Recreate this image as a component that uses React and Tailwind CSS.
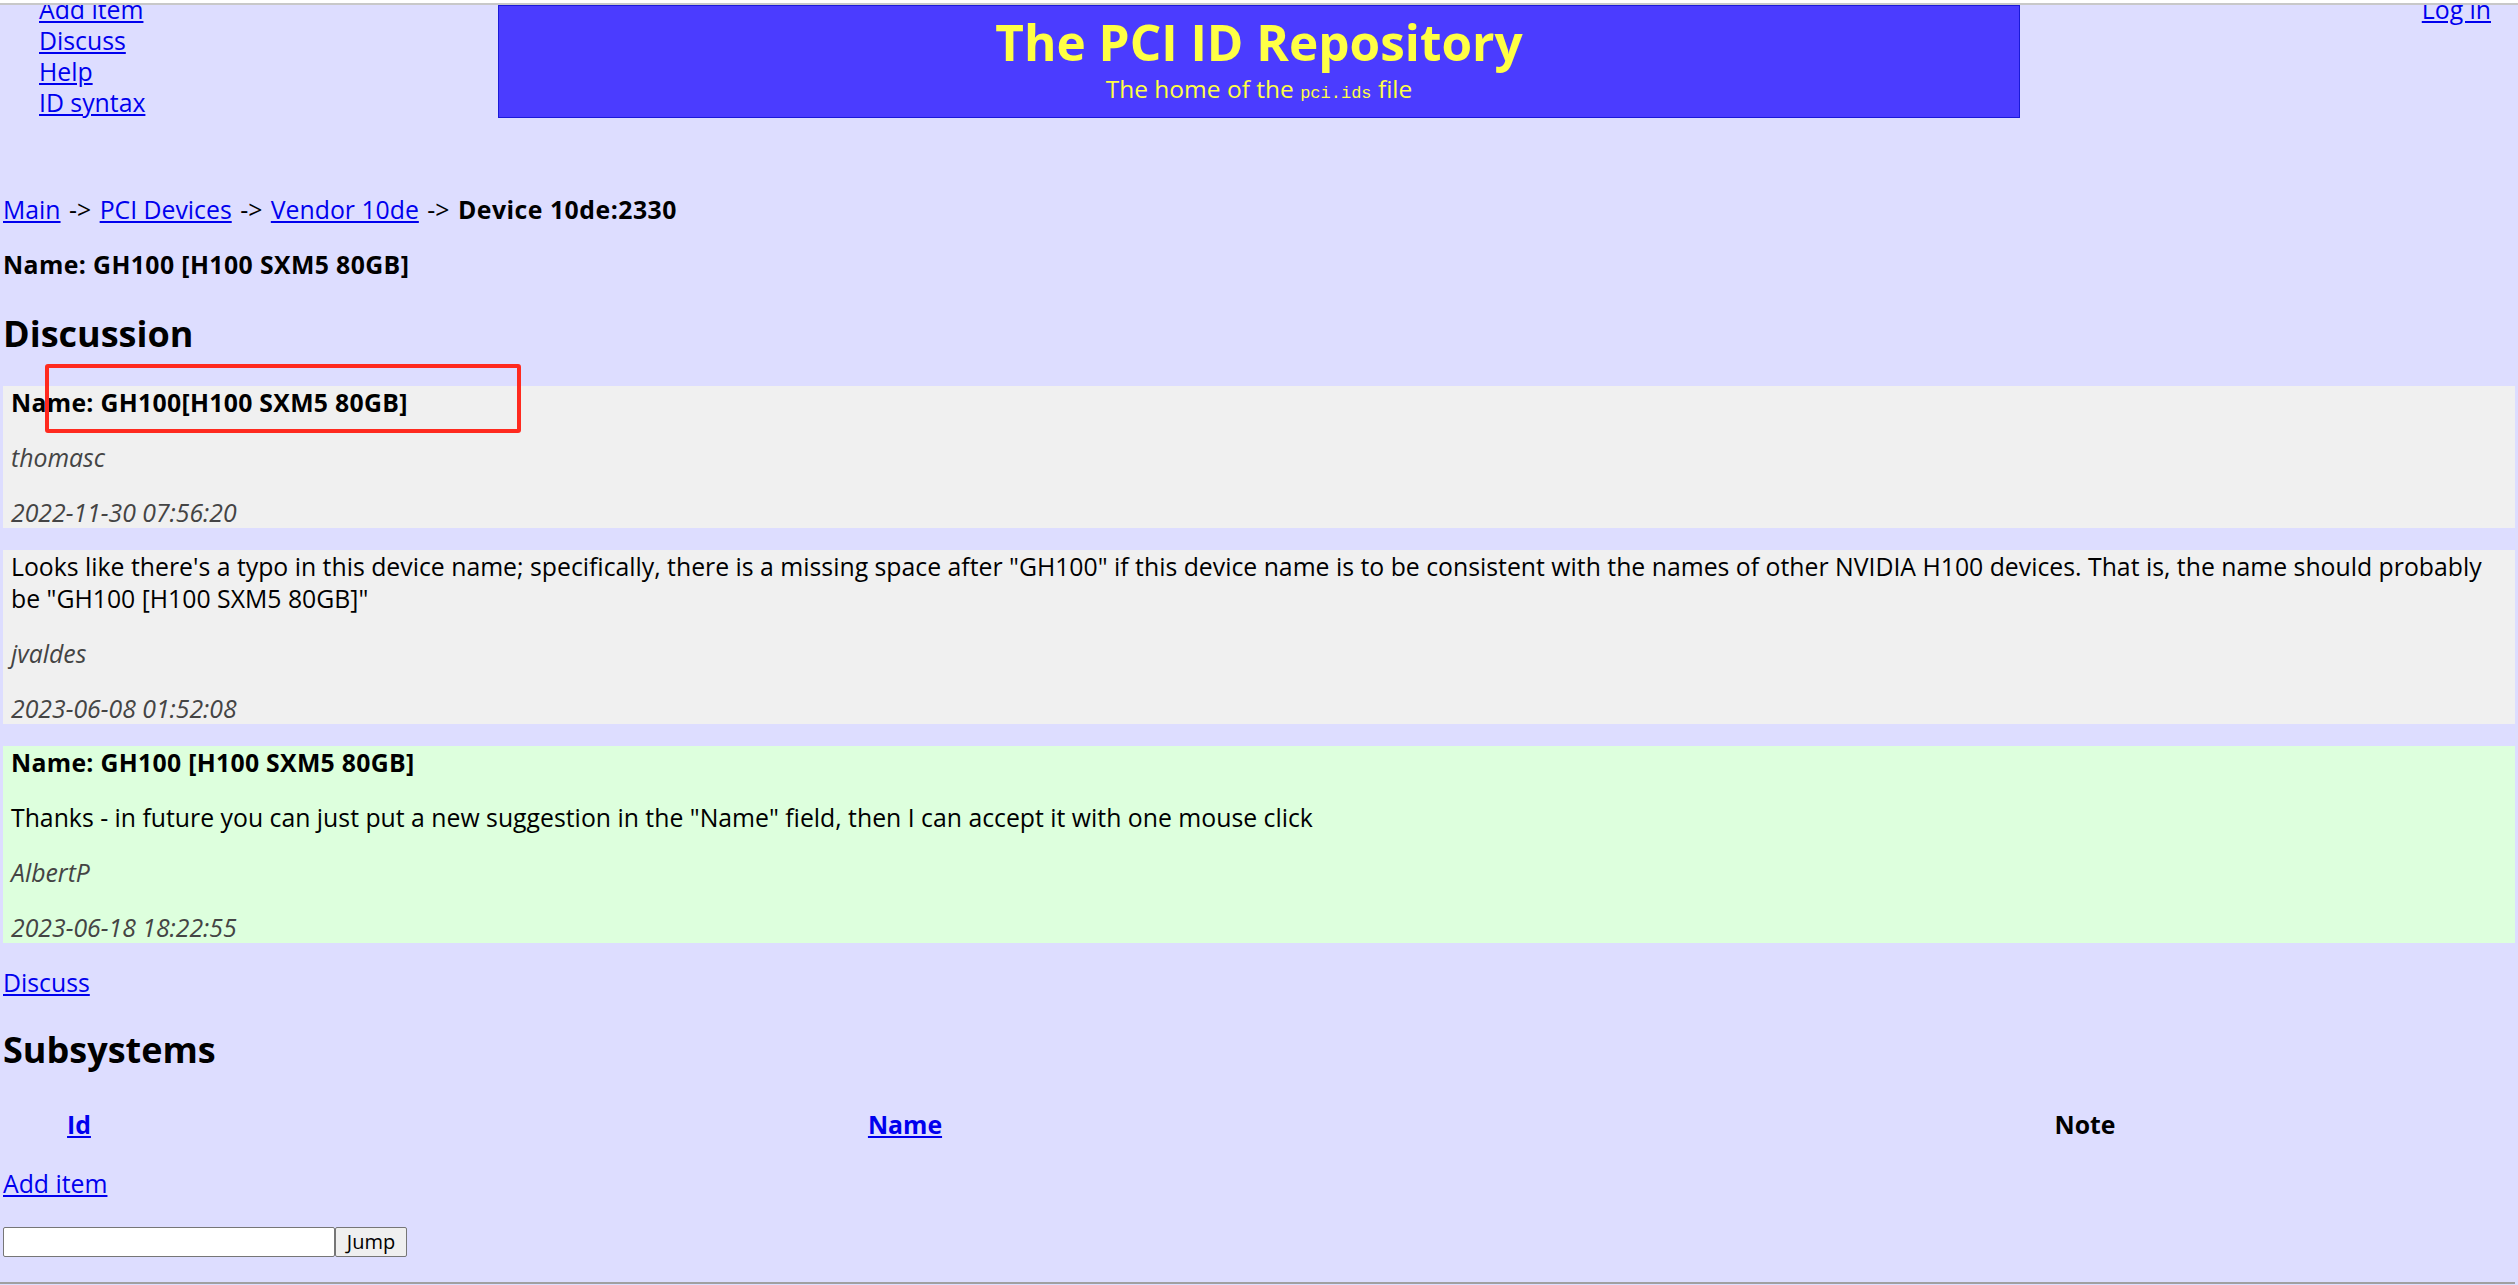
import React from 'react';

const link = "text-[#0000ee] underline";

const Sep = () => <> <span className="inline-block px-[2px]">-&gt;</span> </>;

const Comment = ({ green, name, text, author, date }) => (
    <div className={`${green ? 'bg-[#ddffdd]' : 'bg-[#f0f0f0]'} px-[8px] flex flex-col gap-[23px]`}>
        {name && <div className="font-bold tracking-[0.3px]">{name}</div>}
        {text && <div>{text}</div>}
        <div className="italic text-[#444]">{author}</div>
        <div className="italic text-[#444]">{date}</div>
    </div>
);

const App = () => {
    return (
        <div className="relative min-h-[1285px] bg-[#ddddff] text-black font-['Open_Sans',sans-serif] text-[24.8px] leading-[32px] overflow-hidden flex flex-col">
            <div className="h-[3px] bg-white" />
            <div className="h-[2px] bg-[#c8c8c8]" />

            {/* header */}
            <div className="flex items-start overflow-hidden h-[113px]">
                <ul className="w-[498px] shrink-0 pl-[39px] -mt-[11px] leading-[31px]">
                    <li><a className={link} href="#">Add item</a></li>
                    <li><a className={link} href="#">Discuss</a></li>
                    <li><a className={link} href="#">Help</a></li>
                    <li><a className={link} href="#">ID syntax</a></li>
                </ul>
                <div className="w-[1522px] h-[113px] shrink-0 bg-[#4b3cff] border border-[#1a1ad8] text-[#ffff44] text-center">
                    <div className="text-[49.5px] leading-[72px] font-bold">The PCI ID Repository</div>
                    <div className="-mt-[5px] leading-[32px] text-[24.5px]">
                        The home of the <code className="font-['Liberation_Mono',monospace] text-[17px]">pci.ids</code> file
                    </div>
                </div>
                <div className="flex-1 text-right pr-[27px] -mt-[11px] leading-[31px]">
                    <a className={link} href="#">Log in</a>
                </div>
            </div>

            {/* body */}
            <div className="px-[3px] flex flex-col">
                <div className="mt-[75px]">
                    <a className={link} href="#">Main</a><Sep /><a className={link} href="#">PCI Devices</a><Sep />
                    <a className={link} href="#">Vendor 10de</a><Sep /><b className="tracking-[0.5px]">Device 10de:2330</b>
                </div>
                <div className="mt-[23px] font-bold tracking-[0.4px]">Name: GH100 [H100 SXM5 80GB]</div>

                <h2 className="mt-[30px] mb-[28px] text-[36px] leading-[48px] font-bold">Discussion</h2>

                <div className="flex flex-col gap-[22px]">
                    <Comment name="Name: GH100[H100 SXM5 80GB]" author="thomasc" date="2022-11-30 07:56:20" />
                    <Comment
                        text={'Looks like there\'s a typo in this device name; specifically, there is a missing space after "GH100" if this device name is to be consistent with the names of other NVIDIA H100 devices. That is, the name should probably be "GH100 [H100 SXM5 80GB]"'}
                        author="jvaldes"
                        date="2023-06-08 01:52:08"
                    />
                    <Comment
                        green
                        name="Name: GH100 [H100 SXM5 80GB]"
                        text={'Thanks - in future you can just put a new suggestion in the "Name" field, then I can accept it with one mouse click'}
                        author="AlbertP"
                        date="2023-06-18 18:22:55"
                    />
                </div>

                <div className="mt-[23px]"><a className={link} href="#">Discuss</a></div>

                <h2 className="mt-[28px] text-[36px] leading-[48px] font-bold">Subsystems</h2>

                <div className="mt-[34px] grid grid-cols-[152px_1500px_860px] font-bold text-center">
                    <div><a className={link} href="#">Id</a></div>
                    <div><a className={link} href="#">Name</a></div>
                    <div>Note</div>
                </div>

                <div className="mt-[27px]"><a className={link} href="#">Add item</a></div>

                <div className="mt-[28px] flex">
                    <input className="w-[332px] h-[30px] bg-white border border-[#767676] rounded-[2px]" />
                    <button className="w-[72px] h-[30px] bg-[#efefef] border border-[#767676] rounded-[2px] text-[20px] leading-[26px]">Jump</button>
                </div>
            </div>

            <div className="mt-[25px] h-[2px] bg-[#a0a0a0] mr-[3px]" />

            {/* annotation */}
            <div className="absolute left-[45px] top-[364px] w-[476px] h-[69px] border-[4px] border-[#ff2a1f] rounded-[3px]" />
        </div>
    );
};

export default App;
